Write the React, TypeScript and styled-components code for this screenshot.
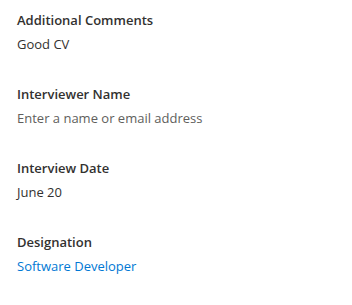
import styled, { createGlobalStyle } from "styled-components";

const Global = createGlobalStyle`
  * { margin: 0; padding: 0; box-sizing: border-box; }
  body {
    background: #ffffff;
    font-family: "Open Sans", "Noto Sans", sans-serif;
    -webkit-font-smoothing: antialiased;
  }
`;

const Panel = styled.div`
  display: flex;
  flex-direction: column;
  gap: 30px;
  padding: 10px 17px;
`;

const Field = styled.div`
  display: flex;
  flex-direction: column;
  gap: 4px;
`;

const Label = styled.div`
  font-size: 13px;
  font-weight: 600;
  line-height: 20px;
  color: #323130;
`;

const Value = styled.div<{ $tone?: "muted" | "link" }>`
  font-size: 13px;
  line-height: 20px;
  color: ${(p) =>
    p.$tone === "muted" ? "#605e5c" : p.$tone === "link" ? "#0078d4" : "#323130"};
`;

const fields: { label: string; value: string; tone?: "muted" | "link" }[] = [
  { label: "Additional Comments", value: "Good CV" },
  { label: "Interviewer Name", value: "Enter a name or email address", tone: "muted" },
  { label: "Interview Date", value: "June 20" },
  { label: "Designation", value: "Software Developer", tone: "link" },
];

export default function App() {
  return (
    <>
      <Global />
      <Panel>
        {fields.map((f) => (
          <Field key={f.label}>
            <Label>{f.label}</Label>
            <Value $tone={f.tone}>{f.value}</Value>
          </Field>
        ))}
      </Panel>
    </>
  );
}
